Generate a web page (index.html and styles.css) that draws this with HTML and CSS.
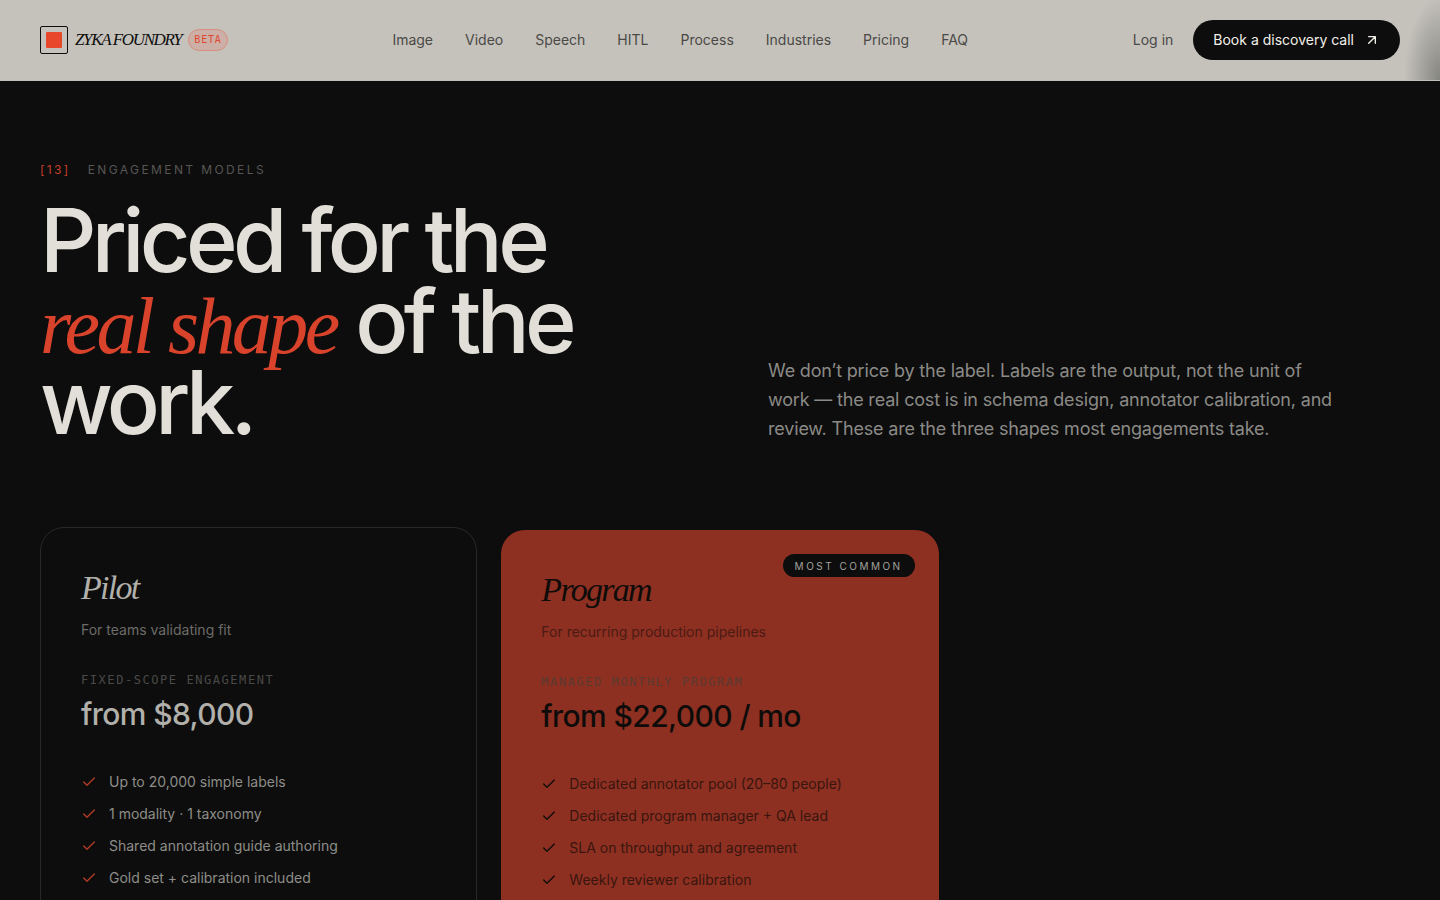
FILE: index.html
```html
<!DOCTYPE html>
<html lang="en">
<head>
<meta charset="utf-8">
<meta name="viewport" content="width=device-width, initial-scale=1">
<title>Zyka Foundry — Engagement models</title>
<link rel="stylesheet" href="styles.css">
</head>
<body>
<svg class="sprite" aria-hidden="true">
  <symbol id="check" viewBox="0 0 24 24"><path d="M20 6 9 17l-5-5"/></symbol>
</svg>
<header class="site-header">
  <a class="brand" href="#">
    <span class="brand-mark"></span>
    <span class="brand-name">ZYKA FOUNDRY</span>
    <span class="beta">BETA</span>
  </a>
  <nav class="nav">
    <a href="#">Image</a>
    <a href="#">Video</a>
    <a href="#">Speech</a>
    <a href="#">HITL</a>
    <a href="#">Process</a>
    <a href="#">Industries</a>
    <a href="#">Pricing</a>
    <a href="#">FAQ</a>
  </nav>
  <div class="actions">
    <a class="login" href="#">Log in</a>
    <a class="cta" href="#">Book a discovery call
      <svg class="arrow" viewBox="0 0 24 24" aria-hidden="true"><path d="M7 7h10v10M7 17 17 7"/></svg>
    </a>
  </div>
</header>
<main class="section">
  <div class="intro">
    <div class="intro-title">
      <p class="eyebrow"><span class="eyebrow-num">[13]</span><span>ENGAGEMENT MODELS</span></p>
      <h1 class="title">Priced for the <em>real shape</em> of the work.</h1>
    </div>
    <p class="lede">We don’t price by the label. Labels are the output, not the unit of work — the real cost is in schema design, annotator calibration, and review. These are the three shapes most engagements take.</p>
  </div>
  <div class="plans">
    <article class="plan plan-outline">
      <h2 class="plan-name">Pilot</h2>
      <p class="plan-for">For teams validating fit</p>
      <p class="plan-kind">FIXED-SCOPE ENGAGEMENT</p>
      <p class="plan-price">from $8,000</p>
      <ul class="features">
        <li><svg class="check"><use href="#check"/></svg>Up to 20,000 simple labels</li>
        <li><svg class="check"><use href="#check"/></svg>1 modality · 1 taxonomy</li>
        <li><svg class="check"><use href="#check"/></svg>Shared annotation guide authoring</li>
        <li><svg class="check"><use href="#check"/></svg>Gold set + calibration included</li>
      </ul>
    </article>
    <article class="plan plan-featured">
      <span class="tag">MOST COMMON</span>
      <h2 class="plan-name">Program</h2>
      <p class="plan-for">For recurring production pipelines</p>
      <p class="plan-kind">MANAGED MONTHLY PROGRAM</p>
      <p class="plan-price">from $22,000 / mo</p>
      <ul class="features">
        <li><svg class="check"><use href="#check"/></svg>Dedicated annotator pool (20–80 people)</li>
        <li><svg class="check"><use href="#check"/></svg>Dedicated program manager + QA lead</li>
        <li><svg class="check"><use href="#check"/></svg>SLA on throughput and agreement</li>
        <li><svg class="check"><use href="#check"/></svg>Weekly reviewer calibration</li>
      </ul>
    </article>
  </div>
</main>
</body>
</html>
```
FILE: styles.css
```css
* { box-sizing: border-box; }

html, body { height: 100%; }

body {
  margin: 0;
  display: flex;
  flex-direction: column;
  overflow: hidden;
  background: #0d0d0d;
  color: #e1dfd8;
  font-family: Inter, "Liberation Sans", sans-serif;
  font-size: 14px;
  line-height: 20px;
}

h1, h2, p, ul { margin: 0; padding: 0; font-weight: 400; }
ul { list-style: none; }
a { color: inherit; text-decoration: none; }

svg { fill: none; stroke: currentColor; stroke-linecap: round; stroke-linejoin: round; }
.sprite { display: none; }

/* Header */
.site-header {
  flex: none;
  display: flex;
  justify-content: space-between;
  align-items: center;
  padding: 20px 40px;
  border-bottom: 1px solid #c0beb8;
  background:
    radial-gradient(ellipse 36px 84px at 100% 100%, #85857f, #c5c2bc00),
    #c5c2bc;
  color: #4a4946;
}
.brand { display: flex; align-items: center; gap: 7px; color: #0d0d0d; }
.brand-mark {
  width: 28px;
  height: 28px;
  padding: 5px;
  border: 1px solid #0d0d0d;
  border-radius: 2px;
}
.brand-mark::before {
  content: "";
  display: block;
  height: 100%;
  border-radius: 1px;
  background: #e8472c;
}
.brand-name {
  font-family: "Liberation Serif", serif;
  font-style: italic;
  font-size: 17px;
  letter-spacing: -0.08em;
  white-space: nowrap;
}
.beta {
  padding: 1px 5px;
  border: 1px solid #d98e80;
  border-radius: 12px;
  background: #ccb0a8;
  color: #e0492f;
  font: 10px/18px "DejaVu Sans Mono", monospace;
  letter-spacing: 0.08em;
}
.nav { display: flex; gap: 32px; }
.actions { display: flex; align-items: center; gap: 20px; }
.cta {
  display: flex;
  align-items: center;
  gap: 10px;
  padding: 10px 20px;
  border-radius: 20px;
  background: #0d0d0d;
  color: #f2f0e9;
}
.arrow { width: 16px; height: 16px; stroke-width: 2; }

/* Intro */
.section { padding: 79px 40px 0; }
.intro {
  display: grid;
  grid-template-columns: 1fr 1fr;
  gap: 96px;
  align-items: end;
}
.eyebrow {
  display: flex;
  gap: 17px;
  color: #565654;
  font-size: 12px;
  letter-spacing: 0.2em;
}
.eyebrow-num { color: #c33e28; }
.title {
  margin-top: 20px;
  color: #e1dfd8;
  font-size: 88px;
  font-weight: 500;
  line-height: 81px;
  letter-spacing: -0.053em;
}
.title em {
  color: #d9432c;
  font-family: "Liberation Serif", serif;
  font-size: 80px;
  font-weight: 400;
  line-height: 0;
  letter-spacing: -0.045em;
}
.lede {
  max-width: 576px;
  color: #8b8a86;
  font-size: 18px;
  line-height: 29px;
  letter-spacing: -0.01em;
}

/* Plans */
.plans {
  display: grid;
  grid-template-columns: repeat(3, 1fr);
  gap: 24px;
  margin-top: 84px;
}
.plan { position: relative; height: 480px; padding: 40px; border-radius: 24px; }
.plan-outline { border: 1px solid #282828; color: #b1b0ab; }
.plan-featured { margin-top: 3px; background: #8e3021; color: #0e0c0b; }
.plan-name {
  font-family: "Liberation Serif", serif;
  font-style: italic;
  font-size: 34px;
  line-height: 40px;
  letter-spacing: -0.05em;
}
.plan-for { margin-top: 12px; color: #6c6b68; }
.plan-kind {
  margin-top: 30px;
  color: #494947;
  font: 12px/20px "DejaVu Sans Mono", monospace;
  letter-spacing: 0.13em;
}
.plan-price { margin-top: 4px; font-size: 30px; line-height: 40px; font-weight: 500; letter-spacing: -0.02em; }
.features { display: grid; gap: 12px; margin-top: 38px; color: #8e8d89; }
.features li { display: flex; align-items: center; gap: 12px; }
.check { width: 16px; height: 16px; stroke-width: 2; color: #b23a27; }
.plan-featured .plan-for { color: #4b1a13; }
.plan-featured .plan-kind { color: #5a3a30; }
.plan-featured .features { color: #38150f; }
.plan-featured .check { color: #0e0c0b; }
.tag {
  position: absolute;
  top: 24px;
  right: 24px;
  padding: 2px 12px 1px;
  border-radius: 12px;
  background: #0d0d0d;
  color: #a3a29d;
  font-size: 10px;
  letter-spacing: 0.25em;
}
```
